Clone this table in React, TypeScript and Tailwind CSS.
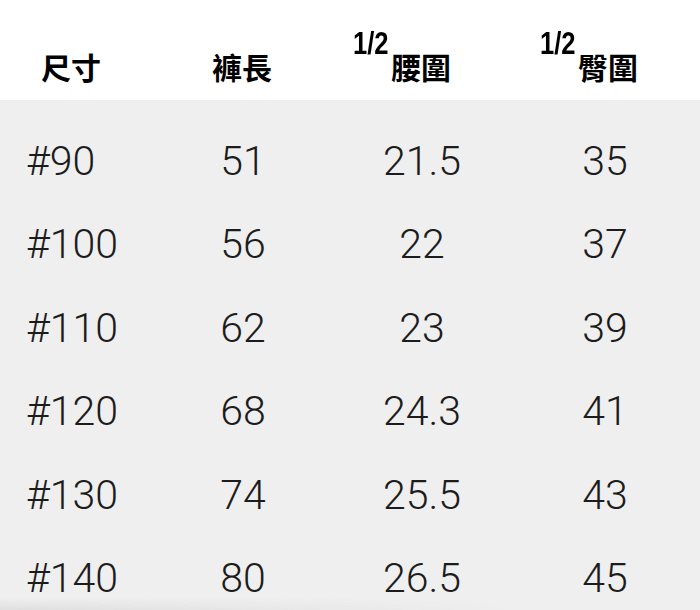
const rows = [
  ['#90', '51', '21.5', '35'],
  ['#100', '56', '22', '37'],
  ['#110', '62', '23', '39'],
  ['#120', '68', '24.3', '41'],
  ['#130', '74', '25.5', '43'],
  ['#140', '80', '26.5', '45'],
];

const cols = 'grid grid-cols-[160px_166px_192px_182px]';

function Half({ label }: { label: string }) {
  return (
    <span className="inline-flex items-end">
      <span className="inline-block w-[38px] mb-[22px] whitespace-nowrap">
        <span className="inline-block origin-left scale-x-[0.8] font-['Liberation_Sans',sans-serif] text-[32px] font-bold leading-none">
          1/2
        </span>
      </span>
      <span>{label}</span>
    </span>
  );
}

export default function App() {
  return (
    <div className="relative w-[700px] h-[610px] overflow-hidden bg-[#efefef] text-[#1c1c1c]">
      {/* header */}
      <div className={`${cols} h-[100px] bg-white items-end pb-[19px] text-black font-['Noto_Sans_CJK_TC',sans-serif] font-bold text-[30px] leading-none`}>
        <div className="pl-[41px]">尺寸</div>
        <div className="pl-[52px]">褲長</div>
        <div className="pl-[27px]"><Half label="腰圍" /></div>
        <div className="pl-[22px]"><Half label="臀圍" /></div>
      </div>

      {/* rows */}
      <div className="pt-[20px] font-['Roboto',sans-serif] font-light text-[41px]">
        {rows.map((r) => (
          <div key={r[0]} className={`${cols} h-[83.4px] items-center`}>
            <div className="pl-[26px]">{r[0]}</div>
            <div className="text-center">{r[1]}</div>
            <div className="text-center">{r[2]}</div>
            <div className="text-center pr-[8px]">{r[3]}</div>
          </div>
        ))}
      </div>

      {/* soft shadow at the bottom edge */}
      <div className="absolute bottom-0 left-0 w-[520px] h-[12px] bg-gradient-to-r from-[#d8d8d8]/70 to-transparent [mask-image:linear-gradient(to_top,black,transparent)]" />
    </div>
  );
}
